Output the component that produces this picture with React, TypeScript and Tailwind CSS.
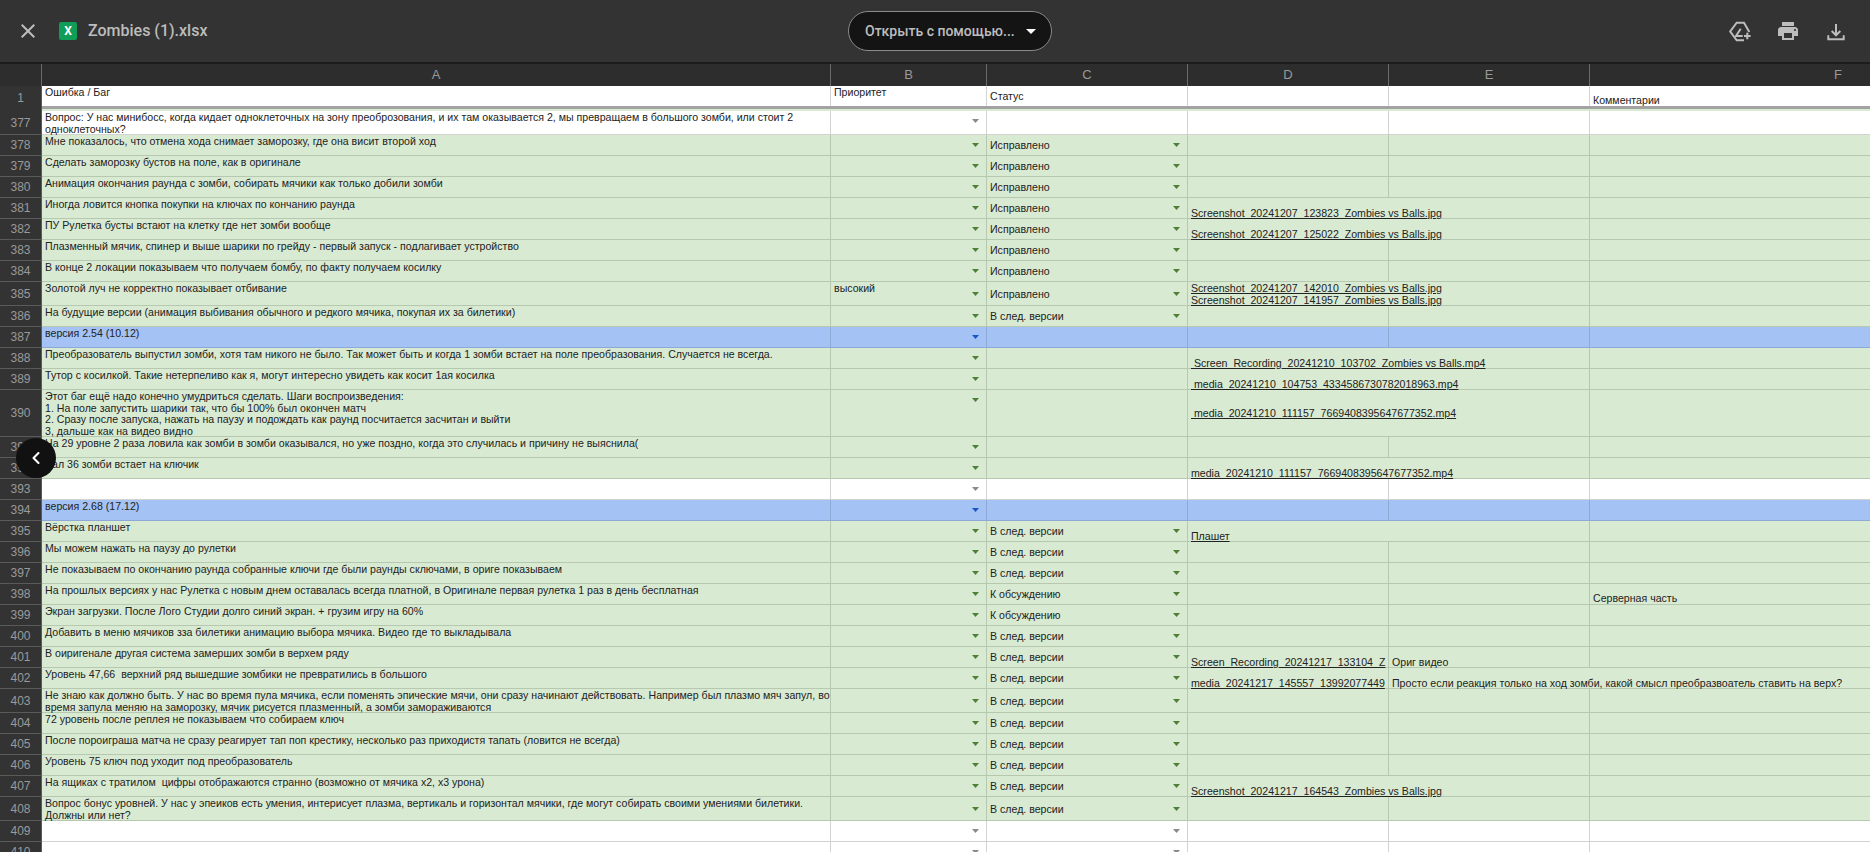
import React from "react";
import { ChevronLeft } from "lucide-react";

type Kind = "green" | "white" | "blue";

type Row = {
  n: number;
  h: number;
  kind: Kind;
  a?: string[];
  b?: string;
  c?: string;
  cCaret?: boolean;
  d?: string[];
  dMiddle?: boolean;
  e?: string;
  f?: string;
  caretTop?: boolean;
};

const FIX = "Исправлено";
const NEXT = "В след. версии";
const TALK = "К обсуждению";

const rows: Row[] = [
  { n: 377, h: 24, kind: "white", caretTop: true, a: ["Вопрос: У нас минибосс, когда кидает одноклеточных на зону преоброзования, и их там оказывается 2, мы превращаем в большого зомби, или стоит 2", "одноклеточных?"] },
  { n: 378, h: 21, kind: "green", c: FIX, a: ["Мне показалось, что отмена хода снимает заморозку, где она висит второй ход"] },
  { n: 379, h: 21, kind: "green", c: FIX, a: ["Сделать заморозку бустов на поле, как в оригинале"] },
  { n: 380, h: 21, kind: "green", c: FIX, a: ["Анимация окончания раунда с зомби, собирать мячики как только добили зомби"] },
  { n: 381, h: 21, kind: "green", c: FIX, a: ["Иногда ловится кнопка покупки на ключах по кончанию раунда"], d: ["Screenshot_20241207_123823_Zombies vs Balls.jpg"] },
  { n: 382, h: 21, kind: "green", c: FIX, a: ["ПУ Рулетка бусты встают на клетку где нет зомби вообще"], d: ["Screenshot_20241207_125022_Zombies vs Balls.jpg"] },
  { n: 383, h: 21, kind: "green", c: FIX, a: ["Плазменный мячик, спинер и выше шарики по грейду - первый запуск - подлагивает устройство"] },
  { n: 384, h: 21, kind: "green", c: FIX, a: ["В конце 2 локации показываем что получаем бомбу, по факту получаем косилку"] },
  { n: 385, h: 24, kind: "green", c: FIX, b: "высокий", a: ["Золотой луч не корректно показывает отбивание"], d: ["Screenshot_20241207_142010_Zombies vs Balls.jpg", "Screenshot_20241207_141957_Zombies vs Balls.jpg"] },
  { n: 386, h: 21, kind: "green", c: NEXT, a: ["На будущие версии (анимация выбивания обычного и редкого мячика, покупая их за билетики)"] },
  { n: 387, h: 21, kind: "blue", a: ["версия 2.54 (10.12)"] },
  { n: 388, h: 21, kind: "green", a: ["Преобразователь выпустил зомби, хотя там никого не было. Так может быть и когда 1 зомби встает на поле преобразования. Случается не всегда."], d: [" Screen_Recording_20241210_103702_Zombies vs Balls.mp4"] },
  { n: 389, h: 21, kind: "green", a: ["Тутор с косилкой. Такие нетерпеливо как я, могут интересно увидеть как косит 1ая косилка"], d: [" media_20241210_104753_4334586730782018963.mp4"] },
  { n: 390, h: 47, kind: "green", caretTop: true, dMiddle: true, a: ["Этот баг ещё надо конечно умудриться сделать. Шаги воспроизведения:", "1. На поле запустить шарики так, что бы 100% был окончен матч", "2. Сразу после запуска, нажать на паузу и подождать как раунд посчитается засчитан и выйти", "3, дальше как на видео видно"], d: [" media_20241210_111157_7669408395647677352.mp4"] },
  { n: 391, h: 21, kind: "green", a: ["На 29 уровне 2 раза ловила как зомби в зомби оказывался, но уже поздно, когда это случилась и причину не выяснила("] },
  { n: 392, h: 21, kind: "green", a: ["Вал 36 зомби встает на ключик"], d: ["media_20241210_111157_7669408395647677352.mp4"] },
  { n: 393, h: 21, kind: "white", caretTop: true },
  { n: 394, h: 21, kind: "blue", a: ["версия 2.68 (17.12)"] },
  { n: 395, h: 21, kind: "green", c: NEXT, a: ["Вёрстка планшет"], d: ["Плашет"] },
  { n: 396, h: 21, kind: "green", c: NEXT, a: ["Мы можем нажать на паузу до рулетки"] },
  { n: 397, h: 21, kind: "green", c: NEXT, a: ["Не показываем по окончанию раунда собранные ключи где были раунды сключами, в ориге показываем"] },
  { n: 398, h: 21, kind: "green", c: TALK, a: ["На прошлых версиях у нас Рулетка с новым днем оставалась всегда платной, в Оригинале первая рулетка 1 раз в день бесплатная"], f: "Серверная часть" },
  { n: 399, h: 21, kind: "green", c: TALK, a: ["Экран загрузки. После Лого Студии долго синий экран. + грузим игру на 60%"] },
  { n: 400, h: 21, kind: "green", c: NEXT, a: ["Добавить в меню мячиков зза билетики анимацию выбора мячика. Видео где то выкладывала"] },
  { n: 401, h: 21, kind: "green", c: NEXT, a: ["В оиригенале другая система замерших зомби в верхем ряду"], d: ["Screen_Recording_20241217_133104_Z"], e: "Ориг видео" },
  { n: 402, h: 21, kind: "green", c: NEXT, a: ["Уровень 47,66  верхний ряд вышедшие зомбики не превратились в большого"], d: ["media_20241217_145557_13992077449"], e: "Просто если реакция только на ход зомби, какой смысл преобразвоатель ставить на верх?" },
  { n: 403, h: 24, kind: "green", c: NEXT, a: ["Не знаю как должно быть. У нас во время пула мячика, если поменять эпические мячи, они сразу начинают действовать. Например был плазмо мяч запул, во", "время запула меняю на заморозку, мячик рисуется плазменный, а зомби замораживаются"] },
  { n: 404, h: 21, kind: "green", c: NEXT, a: ["72 уровень после реплея не показываем что собираем ключ"] },
  { n: 405, h: 21, kind: "green", c: NEXT, a: ["После пороиграша матча не сразу реагирует тап поп крестику, несколько раз приходистя тапать (ловится не всегда)"] },
  { n: 406, h: 21, kind: "green", c: NEXT, a: ["Уровень 75 ключ под уходит под преобразователь"] },
  { n: 407, h: 21, kind: "green", c: NEXT, a: ["На ящиках с тратилом  цифры отображаются странно (возможно от мячика х2, х3 урона)"], d: ["Screenshot_20241217_164543_Zombies vs Balls.jpg"] },
  { n: 408, h: 24, kind: "green", c: NEXT, a: ["Вопрос бонус уровней. У нас у эпеиков есть умения, интерисует плазма, вертикаль и горизонтал мячики, где могут собирать своими умениями билетики.", "Должны или нет?"] },
  { n: 409, h: 21, kind: "white", cCaret: true, caretTop: true },
  { n: 410, h: 21, kind: "white", cCaret: true, caretTop: true },
];

const rowBg: Record<Kind, string> = {
  green: "bg-[#d9ead3] border-[#b6c8b0]",
  white: "bg-white border-[#d2d2d2]",
  blue: "bg-[#a4c2f4] border-[#8ea9d6]",
};

const lineColor: Record<Kind, string> = {
  green: "border-[#b6c8b0]",
  white: "border-[#d2d2d2]",
  blue: "border-[#8ea9d6]",
};

const caretFill: Record<Kind, string> = {
  green: "fill-[#4e7f37]",
  white: "fill-[#8a8a8a]",
  blue: "fill-[#1c55c9]",
};

function Caret({ kind, top }: { kind: Kind; top?: boolean }) {
  return (
    <svg
      viewBox="0 0 7 4"
      className={`w-[7px] h-[4px] shrink-0 ml-auto mr-[7px] ${top ? "self-start mt-[8px]" : "self-center"} ${caretFill[kind]}`}
    >
      <path d="M0 0h7L3.5 4z" />
    </svg>
  );
}

function SheetRow({ row }: { row: Row }) {
  const { kind } = row;
  const line = lineColor[kind];
  const dOverflow = !!row.d && !row.e;
  const eOverflow = !!row.e && row.e.length > 30;
  const hasC = !!row.c || row.cCaret;

  return (
    <div className="flex shrink-0" style={{ height: row.h }}>
      <div className="w-[42px] shrink-0 flex items-center justify-center bg-[#333333] border-b border-r border-[#5a5a5a] text-[12px] text-[#9a9a9a]">
        {row.n}
      </div>
      <div className={`flex flex-1 border-b text-[10.6px] leading-[11.5px] text-[#222222] ${rowBg[kind]}`}>
        <div className={`w-[789px] shrink-0 border-r pl-[3px] whitespace-pre ${line}`}>
          <div className="translate-y-px">
            {row.a?.map((t, i) => <div key={i}>{t}</div>)}
          </div>
        </div>
        <div className={`w-[156px] shrink-0 border-r pl-[3px] flex ${line}`}>
          {row.b && <span className="whitespace-pre translate-y-px">{row.b}</span>}
          <Caret kind={kind} top={row.caretTop} />
        </div>
        <div className={`w-[201px] shrink-0 border-r pl-[3px] flex items-center ${line}`}>
          {row.c && <span className="whitespace-pre translate-y-px">{row.c}</span>}
          {hasC && <Caret kind={kind} top={row.caretTop} />}
        </div>
        <div
          className={`w-[201px] shrink-0 pl-[3px] flex flex-col underline whitespace-pre ${row.dMiddle ? "justify-center" : "justify-end"} ${dOverflow ? "relative z-10" : "border-r"} ${line}`}
        >
          <div className="translate-y-px">
            {row.d?.map((t, i) => <div key={i}>{t}</div>)}
          </div>
        </div>
        <div
          className={`w-[201px] shrink-0 pl-[3px] flex flex-col justify-end whitespace-pre ${eOverflow ? "" : "border-r"} ${line}`}
        >
          <div className="translate-y-px">{row.e}</div>
        </div>
        <div className="flex-1 pl-[3px] flex flex-col justify-end whitespace-pre">{row.f}</div>
      </div>
    </div>
  );
}

function ColHead({ w, label, last }: { w: string; label: string; last?: boolean }) {
  return (
    <div className={`${w} shrink-0 flex items-center justify-center ${last ? "" : "border-r border-[#6a6a6a]"}`}>
      {label}
    </div>
  );
}

export default function App() {
  return (
    <div
      className="relative h-[852px] w-[1870px] overflow-hidden bg-white flex flex-col"
      style={{ fontFamily: '"Liberation Sans", Arial, sans-serif' }}
    >
      {/* Viewer top bar */}
      <header
        className="h-[62px] shrink-0 bg-[#333333] flex items-center text-[#bdbdbd]"
        style={{ fontFamily: 'Roboto, "Liberation Sans", sans-serif' }}
      >
        <div className="w-[848px] shrink-0 flex items-center">
          <button className="w-[56px] h-[48px] flex items-center justify-center">
            <svg viewBox="0 0 24 24" className="w-6 h-6 fill-[#bdbdbd]">
              <path d="M19 6.41 17.59 5 12 10.59 6.41 5 5 6.41 10.59 12 5 17.59 6.41 19 12 13.41 17.59 19 19 17.59 13.41 12z" />
            </svg>
          </button>
          <div className="ml-[3px] w-[18px] h-[18px] rounded-[2px] bg-[#0f9d58] flex items-center justify-center text-white text-[12px] font-bold">
            X
          </div>
          <span className="ml-[11px] text-[16px] font-medium">Zombies (1).xlsx</span>
        </div>
        <button className="w-[204px] h-[40px] shrink-0 rounded-full bg-[#141414] border border-[#8a8a8a] flex items-center pl-[16px] text-[14px] font-medium whitespace-nowrap">
          <span>Открыть с помощью...</span>
          <svg viewBox="0 0 10 5" className="w-[10px] h-[5px] ml-auto mr-[15px] fill-white">
            <path d="M0 0h10L5 5z" />
          </svg>
        </button>
        <div className="flex-1 flex justify-end pr-[10px]">
          <button className="w-12 h-12 flex items-center justify-center">
            <svg viewBox="0 0 24 24" className="w-6 h-6 fill-none stroke-[#bdbdbd] stroke-2">
              <path d="M16 21.3H8.7L2.2 12.5 8.7 3.7H16L21.3 13" />
              <path d="M12.7 9.7 8 17h6.7" />
              <path d="M19.3 13.7v6.6M16 17h6.6" />
            </svg>
          </button>
          <button className="w-12 h-12 flex items-center justify-center">
            <svg viewBox="0 0 24 24" className="w-6 h-6 fill-[#bdbdbd]">
              <path d="M19 8H5c-1.66 0-3 1.34-3 3v6h4v4h12v-4h4v-6c0-1.66-1.34-3-3-3zm-3 11H8v-5h8v5zm3-7c-.55 0-1-.45-1-1s.45-1 1-1 1 .45 1 1-.45 1-1 1zm-1-9H6v4h12V3z" />
            </svg>
          </button>
          <button className="w-12 h-12 flex items-center justify-center">
            <svg viewBox="0 0 24 24" className="w-6 h-6 fill-none stroke-[#bdbdbd] stroke-2">
              <path d="M12 5v11M7.7 12l4.3 4.3 4.3-4.3" />
              <path d="M4.3 16.3v4h15.4v-4" />
            </svg>
          </button>
        </div>
      </header>

      {/* Column letters */}
      <div className="h-[24px] shrink-0 bg-[#2d2d2d] border-t-2 border-[#1c1c1c] flex text-[13px] text-[#999999]">
        <div className="w-[42px] shrink-0 border-r border-[#6a6a6a]" />
        <ColHead w="w-[789px]" label="A" />
        <ColHead w="w-[156px]" label="B" />
        <ColHead w="w-[201px]" label="C" />
        <ColHead w="w-[201px]" label="D" />
        <ColHead w="w-[201px]" label="E" />
        <ColHead w="w-[496px]" label="F" last />
      </div>

      {/* Frozen row 1 */}
      <div className="h-[23px] shrink-0 flex">
        <div className="w-[42px] shrink-0 flex items-center justify-center bg-[#333333] border-r border-[#5a5a5a] text-[12px] text-[#9a9a9a]">
          1
        </div>
        <div className="flex flex-1 border-b-[3px] border-[#a3a3a3] text-[10.6px] leading-[11.5px] text-[#222222]">
          <div className="w-[789px] shrink-0 border-r border-[#d2d2d2] pl-[3px] pt-px">Ошибка / Баг</div>
          <div className="w-[156px] shrink-0 border-r border-[#d2d2d2] pl-[3px] pt-px">Приоритет</div>
          <div className="w-[201px] shrink-0 border-r border-[#d2d2d2] pl-[3px] pt-px flex items-center">Статус</div>
          <div className="w-[201px] shrink-0 border-r border-[#d2d2d2]" />
          <div className="w-[201px] shrink-0 border-r border-[#d2d2d2]" />
          <div className="flex-1 pl-[3px] flex items-end">Комментарии</div>
        </div>
      </div>

      {/* Hidden rows strip */}
      <div className="h-[2px] shrink-0 flex">
        <div className="w-[42px] shrink-0 bg-[#333333] border-r border-[#5a5a5a]" />
        <div className="flex-1 bg-[#d9ead3]" />
      </div>

      {rows.map((row) => (
        <SheetRow key={row.n} row={row} />
      ))}

      {/* Previous file arrow */}
      <button className="absolute left-[16px] top-[438px] w-10 h-10 rounded-full bg-[#111111] flex items-center justify-center text-white">
        <ChevronLeft className="w-5 h-5" strokeWidth={2.5} />
      </button>
    </div>
  );
}
